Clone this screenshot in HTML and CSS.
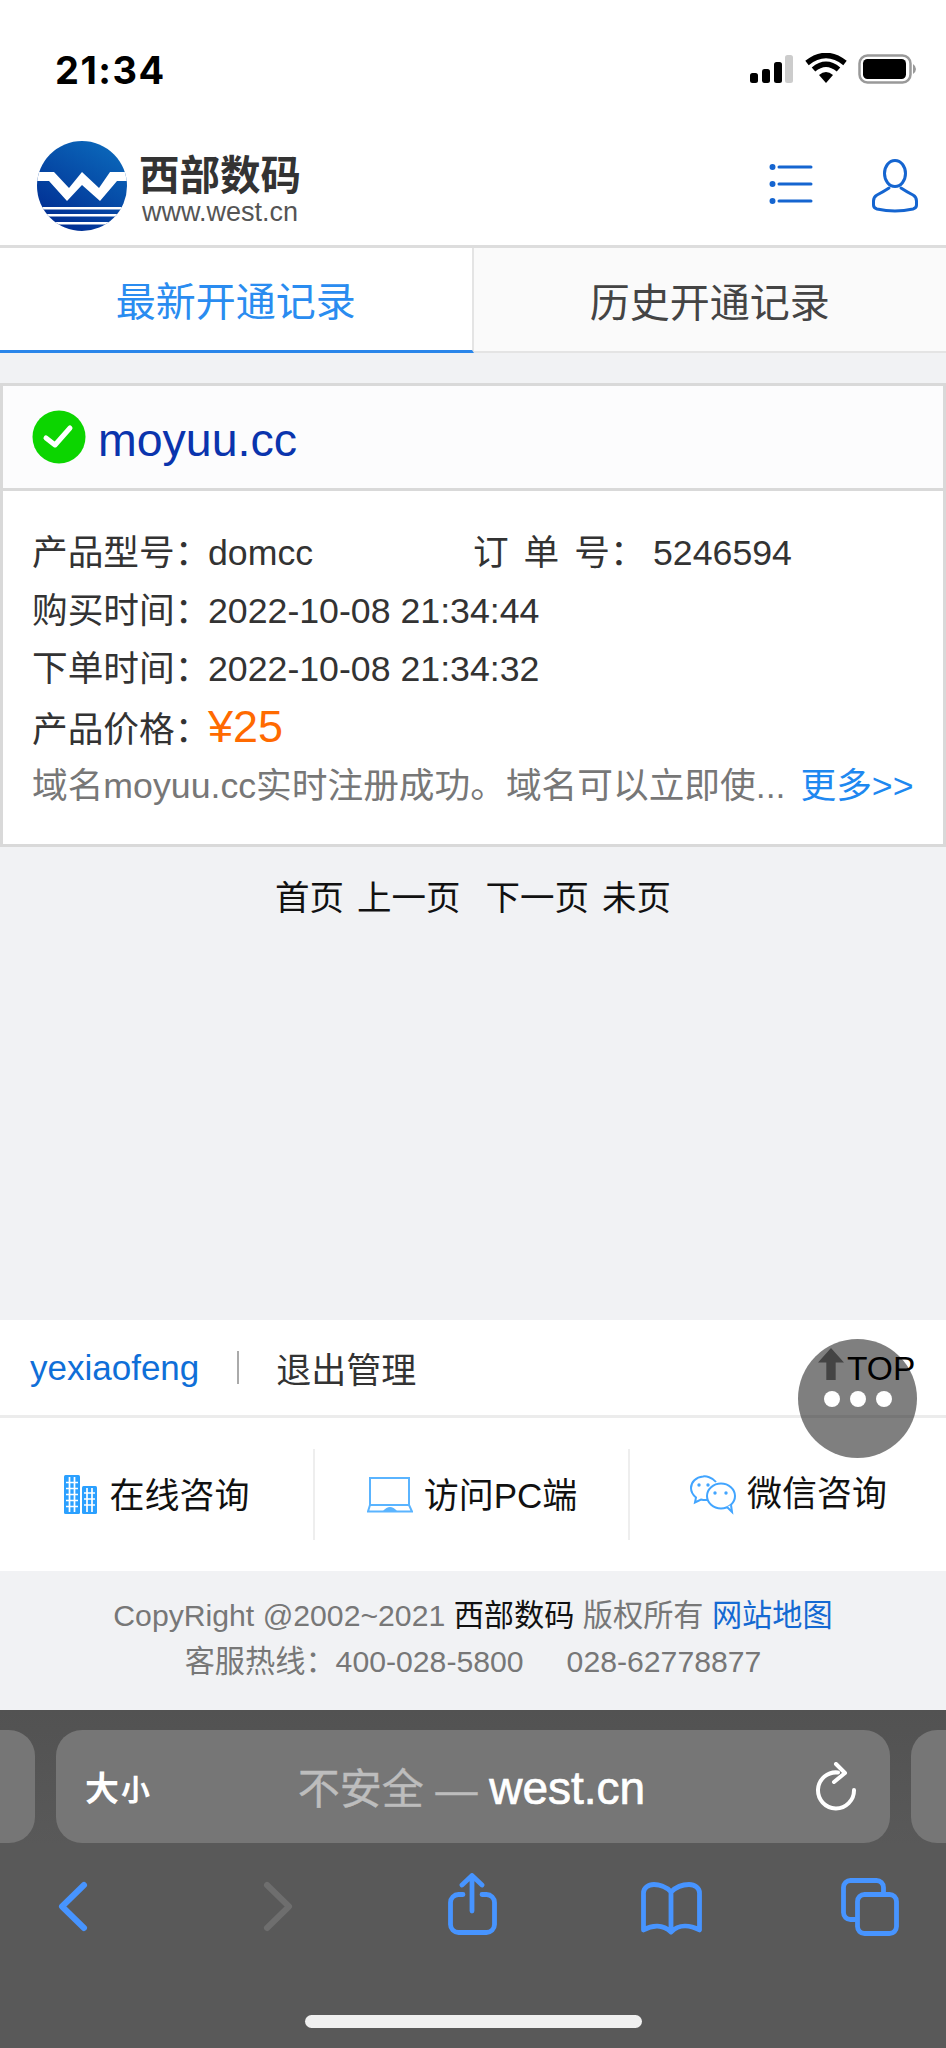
FILE: index.html
```html
<!DOCTYPE html>
<html lang="zh-CN">
<head>
  <meta charset="UTF-8" />
  <title>最新开通记录 - 西部数码</title>
  <link rel="stylesheet" href="styles.css">
</head>
<body>
  <div class="status">
    <span class="time">21:34</span>
    <svg class="status-icons" width="170" height="32" viewBox="0 0 170 32">
      <rect x="3" y="20" width="8" height="10" rx="2.5"/>
      <rect x="15" y="16" width="8" height="14" rx="2.5"/>
      <rect x="27" y="9" width="8" height="21" rx="2.5"/>
      <rect x="38" y="2" width="8" height="28" rx="2.5" fill="#ccc"/>
      <path d="M60 10 Q79 -5 98 10" fill="none" stroke="#000" stroke-width="5.5"/>
      <path d="M66.5 16.5 Q79 6 91.5 16.5" fill="none" stroke="#000" stroke-width="5.5"/>
      <path d="M72 22 Q79 16 86 22 L79 30 Z"/>
      <rect x="112.5" y="2.5" width="51" height="27" rx="8" fill="none" stroke="#999" stroke-width="2.5"/>
      <rect x="116" y="6" width="43" height="20" rx="4.5"/>
      <path d="M166 11 Q169 13 169 16 Q169 19 166 21 Z" fill="#999"/>
    </svg>
  </div>

  <header class="top">
    <div class="logo">
      <svg width="92" height="92" viewBox="-1 -1 92 92">
        <defs>
          <linearGradient id="logo-blue" x1="0.8" y1="0" x2="0.2" y2="1">
            <stop offset="0" stop-color="#0b69bb"/>
            <stop offset="1" stop-color="#002a90"/>
          </linearGradient>
          <clipPath id="logo-clip"><circle cx="45" cy="45" r="45"/></clipPath>
        </defs>
        <g clip-path="url(#logo-clip)">
          <rect width="90" height="90" fill="url(#logo-blue)"/>
          <path d="M0 31 H17 L32 47 L45 31 L62 47 L73 31 H90 V40 H80 L63 60 L45 44 L30 60 L12 40 H0 Z" fill="#fff"/>
          <rect y="66" width="90" height="2.5" fill="#fff"/>
          <rect y="73" width="90" height="2.5" fill="#fff"/>
          <rect y="81" width="90" height="2.5" fill="#fff"/>
        </g>
      </svg>
      <div class="logo-text">
        <div class="logo-cn">西部数码</div>
        <div class="logo-url">www.west.cn</div>
      </div>
    </div>
    <div class="top-icons">
      <svg class="menu-icon" width="46" height="44" viewBox="0 0 46 44" fill="none" stroke="#1565d0" stroke-width="3" stroke-linecap="round">
        <path d="M10 5 H42 M10 22 H42 M10 39 H42"/>
        <circle cx="3.5" cy="5" r="2" fill="#1565d0" stroke-width="2"/>
        <circle cx="3.5" cy="22" r="2" fill="#1565d0" stroke-width="2"/>
        <circle cx="3.5" cy="39" r="2" fill="#1565d0" stroke-width="2"/>
      </svg>
      <svg width="48" height="54" viewBox="0 0 48 54" fill="none" stroke="#1565d0" stroke-width="3" stroke-linecap="round">
        <ellipse cx="24" cy="14.5" rx="10.5" ry="13"/>
        <path d="M18 29 Q12 33 6 36 Q2.5 38 2.5 42 V46 Q2.5 49 6 50 Q24 54 42 50 Q45.5 49 45.5 46 V42 Q45.5 38 42 36 Q36 33 30 29"/>
      </svg>
    </div>
  </header>

  <nav class="tabs">
    <a class="tab tab-on">最新开通记录</a>
    <a class="tab">历史开通记录</a>
  </nav>

  <main class="main">
    <section class="card">
      <div class="card-title">
        <svg width="54" height="54" viewBox="0 0 54 54">
          <circle cx="27" cy="27" r="26.5" fill="#0cd500"/>
          <path d="M14 28 L23 35 L38 18" fill="none" stroke="#fff" stroke-width="5" stroke-linecap="round" stroke-linejoin="round"/>
        </svg>
        <a class="domain">moyuu.cc</a>
      </div>
      <div class="card-body">
        <div class="row">
          <span class="label">产品型号：</span><span class="val val-type">domcc</span>
          <span class="label label-wide">订 单 号：</span><span class="val">5246594</span>
        </div>
        <div class="row"><span class="label">购买时间：</span><span class="val">2022-10-08 21:34:44</span></div>
        <div class="row"><span class="label">下单时间：</span><span class="val">2022-10-08 21:34:32</span></div>
        <div class="row"><span class="label">产品价格：</span><span class="price">¥25</span></div>
        <div class="row row-note">
          <span class="note">域名moyuu.cc实时注册成功。域名可以立即使...</span>
          <a class="more">更多&gt;&gt;</a>
        </div>
      </div>
    </section>
    <div class="pager">
      <a>首页</a><a>上一页</a><a class="pager-next">下一页</a><a>未页</a>
    </div>
  </main>

  <div class="user-row">
    <a class="user-name">yexiaofeng</a>
    <i class="user-sep"></i>
    <a class="user-out">退出管理</a>
  </div>

  <div class="links">
    <a class="link">
      <svg width="34" height="40" viewBox="0 0 34 40">
        <rect x="0" y="0" width="16" height="39" rx="1.5" fill="#2ba0ff"/>
        <rect x="18" y="11" width="15" height="28" rx="1.5" fill="#2ba0ff"/>
        <path d="M5.5 2 V37 M10.5 2 V37 M2 7.5 H14 M2 13.5 H14 M2 19.5 H14 M2 25.5 H14 M2 31.5 H14 M23 13 V37 M28 13 V37 M20 18 H31 M20 24 H31 M20 30 H31" stroke="#fff" stroke-width="1.7"/>
      </svg>
      <span>在线咨询</span>
    </a>
    <a class="link">
      <svg width="46" height="36" viewBox="0 0 46 36" fill="none" stroke="#5ab4ff" stroke-width="2">
        <rect x="3" y="1" width="39" height="27"/>
        <path d="M3 28 L1 34.5 H45 L42 28"/>
        <path d="M16 34 Q23 26 30 34 Z" fill="#5ab4ff" stroke="none"/>
      </svg>
      <span>访问PC端</span>
    </a>
    <a class="link">
      <svg width="46" height="40" viewBox="0 0 46 40" fill="none" stroke="#42a5ff" stroke-width="2">
        <path d="M26 7 C22 2 16 1 13 1.5 C6 2 1 7 1 13 C1 17 3 20 6 22.5 L5 27.5 L11 24.5 C13 25 15 25.2 17 25"/>
        <ellipse cx="31" cy="21" rx="14" ry="12.5" fill="#fff"/>
        <path d="M37 32 L42 37 L41 30" fill="#fff"/>
        <circle cx="9" cy="10" r="1.7" fill="#42a5ff" stroke="none"/>
        <circle cx="18" cy="10" r="1.7" fill="#42a5ff" stroke="none"/>
        <circle cx="25" cy="18" r="1.7" fill="#42a5ff" stroke="none"/>
        <circle cx="36" cy="18" r="1.7" fill="#42a5ff" stroke="none"/>
      </svg>
      <span class="link-up">微信咨询</span>
    </a>
  </div>

  <footer class="foot">
    <div>CopyRight @2002~2021 <b class="foot-brand">西部数码</b> 版权所有 <a class="foot-map">网站地图</a></div>
    <div>客服热线：400-028-5800<span class="foot-tel">028-62778877</span></div>
  </footer>

  <div class="browser">
    <div class="pills">
      <div class="pill pill-left"></div>
      <div class="pill pill-url">
        <div class="aa">大<small>小</small></div>
        <div class="addr"><span class="addr-warn">不安全 — </span><span class="addr-host">west.cn</span></div>
        <svg class="reload" width="44" height="52" viewBox="0 0 44 52" fill="none" stroke="#fff" stroke-width="4" stroke-linecap="round" stroke-linejoin="round">
          <path d="M24 10.5 A18 18 0 1 0 40 28"/>
          <path d="M22 2 L31 11 L20 20"/>
        </svg>
      </div>
      <div class="pill pill-right"></div>
    </div>
    <div class="nav">
      <svg width="32" height="64" viewBox="0 0 32 64" fill="none" stroke="#4794ff" stroke-width="6" stroke-linecap="round" stroke-linejoin="round">
        <path d="M27 12 L5 33.5 L27 55"/>
      </svg>
      <svg class="nav-fwd" width="32" height="64" viewBox="0 0 32 64" fill="none" stroke="#6e6e6e" stroke-width="6" stroke-linecap="round" stroke-linejoin="round">
        <path d="M5 12 L27 33.5 L5 55"/>
      </svg>
      <svg class="nav-share" width="54" height="64" viewBox="0 0 54 64" fill="none" stroke="#4794ff" stroke-width="4.8" stroke-linecap="round" stroke-linejoin="round">
        <path d="M17 21.5 H12.5 a8 8 0 0 0 -8 8 V51.5 a8 8 0 0 0 8 8 H40.5 a8 8 0 0 0 8 -8 V29.5 a8 8 0 0 0 -8 -8 H36"/>
        <path d="M26 3 V38 M16 12 L26 2.5 L36 12"/>
      </svg>
      <svg class="nav-book" width="68" height="64" viewBox="0 0 68 64" fill="none" stroke="#4794ff" stroke-width="4.8" stroke-linecap="round" stroke-linejoin="round">
        <path d="M33 19 C28 13 20 11.5 16 11.5 C10 11.5 5.5 15 5.5 20 V57 C14 52 25 51 33 59 C41 51 52 52 61.5 57 V20 C61.5 15 57 11.5 51 11.5 C47 11.5 39 13 33 19 V57"/>
      </svg>
      <svg class="nav-tabs" width="62" height="64" viewBox="0 0 62 64" fill="none" stroke="#4794ff" stroke-width="4.8" stroke-linecap="round" stroke-linejoin="round">
        <path d="M44.5 19 V14.5 a7 7 0 0 0 -7 -7 H11.5 a7 7 0 0 0 -7 7 V39.5 a7 7 0 0 0 7 7 H16"/>
        <rect x="18.5" y="21.5" width="39" height="39" rx="7"/>
      </svg>
    </div>
    <div class="home-bar"></div>
  </div>

  <div class="to-top"><span class="to-top-arrow"></span><span>TOP</span></div>
  <div class="float-ball"><i></i><i></i><i></i></div>
</body>
</html>
```

FILE: styles.css
```css
* { box-sizing: border-box; }
html, body { margin: 0; padding: 0; }
body {
  position: relative;
  width: 946px;
  height: 2048px;
  overflow: hidden;
  display: flex;
  flex-direction: column;
  background: #f1f2f4;
  color: #333;
  font-family: "Liberation Sans", "Noto Sans CJK SC", sans-serif;
  font-size: 35.7px;
}
a { color: inherit; text-decoration: none; }

.status { height: 120px; background: #fff; display: flex; justify-content: space-between; padding: 52px 29px 0 55px; }
.time { font-family: Inter, "Liberation Sans", sans-serif; font-weight: 700; font-size: 38px; letter-spacing: 1.5px; line-height: 36px; color: #000; }
.status-icons { margin-top: 1px; }

.top { height: 128px; background: #fff; border-bottom: 3px solid #ddd; display: flex; justify-content: space-between; padding: 20px 27px 0 36px; }
.logo { display: flex; gap: 11px; }
.logo-text { padding-top: 16px; }
.logo-cn { font-size: 40.5px; line-height: 40px; font-weight: 700; color: #333; white-space: nowrap; }
.logo-url { font-size: 27px; line-height: 32px; color: #555; margin-left: 3px; }
.top-icons { display: flex; gap: 56px; padding-top: 19px; align-items: flex-start; }
.menu-icon { margin-top: 3px; }

.tabs { display: flex; height: 105px; }
.tab { width: 473px; display: flex; align-items: center; justify-content: center; font-size: 40px; background: #fafafa; color: #444; border-bottom: 2px solid #e4e4e4; }
.tab-on { width: 474px; background: #fff; color: #2a8cf0; border-bottom: 3px solid #2a86ea; border-right: 2px solid #e4e4e4; }

.main { flex: 1; padding-top: 30px; }
.card { border: 3px solid #d9d9d9; background: #fff; }
.card-title { height: 105px; background: #fcfcfd; border-bottom: 3px solid #d9d9d9; display: flex; align-items: center; gap: 12px; padding-left: 29px; }
.domain { font-size: 46.5px; color: #0a34ad; padding-top: 5px; }
.card-body { padding: 33px 0 30px 29px; color: #333; }
.row { height: 58px; line-height: 58px; display: flex; align-items: baseline; white-space: nowrap; }
.label { width: 176px; }
.label-wide { width: 180px; word-spacing: 5px; }
.val-type { width: 265px; }
.price { font-size: 45px; color: #ff6a00; }
.row-note { gap: 15px; padding-top: 1px; }
.note { color: #777; }
.more { color: #1e88f0; }
.pager { height: 96px; display: flex; align-items: center; justify-content: center; gap: 13px; color: #111; font-size: 34.5px; }
.pager-next { margin-left: 12px; }

.user-row { height: 98px; background: #fff; border-bottom: 3px solid #ececec; display: flex; align-items: center; padding-left: 30px; font-size: 35px; }
.user-name { color: #0f6fd8; padding-top: 1px; }
.user-sep { width: 2px; height: 33px; background: #aaa; margin: 0 37px 0 38px; }
.user-out { color: #333; }

.links { height: 153px; background: #fff; display: grid; grid-template-columns: 315px 315px 316px; align-items: center; color: #111; font-size: 35px; }
.link { height: 91px; display: flex; align-items: center; justify-content: center; gap: 11px; padding-left: 1px; border-right: 2px solid #eee; }
.link:last-child { border-right: 0; }
.link span { padding-bottom: 4px; }
.link .link-up { padding-bottom: 8px; }

.foot { height: 139px; padding-top: 22px; text-align: center; color: #777; font-size: 30.2px; line-height: 46px; }
.foot-brand { font-weight: 400; color: #111; }
.foot-map { color: #1469d2; }
.foot-tel { margin-left: 43px; }

.browser { height: 338px; background: linear-gradient(#525252, #595959 40%); padding-top: 20px; position: relative; }
.pills { display: flex; gap: 21px; height: 113px; }
.pill { background: #767676; border-radius: 26px; }
.pill-left { width: 35px; border-radius: 0 26px 26px 0; }
.pill-right { width: 35px; border-radius: 26px 0 0 26px; }
.pill-url { flex: 1; display: grid; grid-template-columns: 1fr auto 1fr; align-items: center; padding: 0 32px 0 29px; color: #fff; }
.aa { font-size: 34px; font-weight: 700; white-space: nowrap; }
.aa small { font-size: 29px; margin-left: 2px; }
.addr { white-space: nowrap; margin-top: -3px; }
.addr-warn { font-size: 42px; color: #bdbdbd; -webkit-text-stroke: 0.4px #bdbdbd; }
.addr-host { font-size: 46px; -webkit-text-stroke: 0.7px #fff; }
.reload { justify-self: end; margin-top: 2px; }
.nav { display: flex; padding: 30px 0 0 57px; }
.nav-fwd { margin-left: 173px; }
.nav-share { margin-left: 152px; }
.nav-book { margin-left: 138px; }
.nav-tabs { margin-left: 133px; }
.home-bar { position: absolute; left: 305px; top: 305px; width: 337px; height: 13px; border-radius: 7px; background: #f0f0f0; }

.to-top { position: absolute; left: 818px; top: 1346px; height: 46px; display: flex; align-items: center; gap: 3px; color: #000; font-size: 33.5px; }
.to-top-arrow { width: 26px; height: 32px; background: #888; clip-path: polygon(50% 0, 100% 45%, 68% 45%, 68% 100%, 32% 100%, 32% 45%, 0 45%); margin-bottom: 10px; }
.float-ball { position: absolute; left: 798px; top: 1339px; width: 119px; height: 119px; border-radius: 50%; background: rgba(0, 0, 0, 0.5); display: flex; align-items: center; justify-content: center; gap: 10px; }
.float-ball i { width: 16px; height: 16px; border-radius: 50%; background: #fff; }
```
